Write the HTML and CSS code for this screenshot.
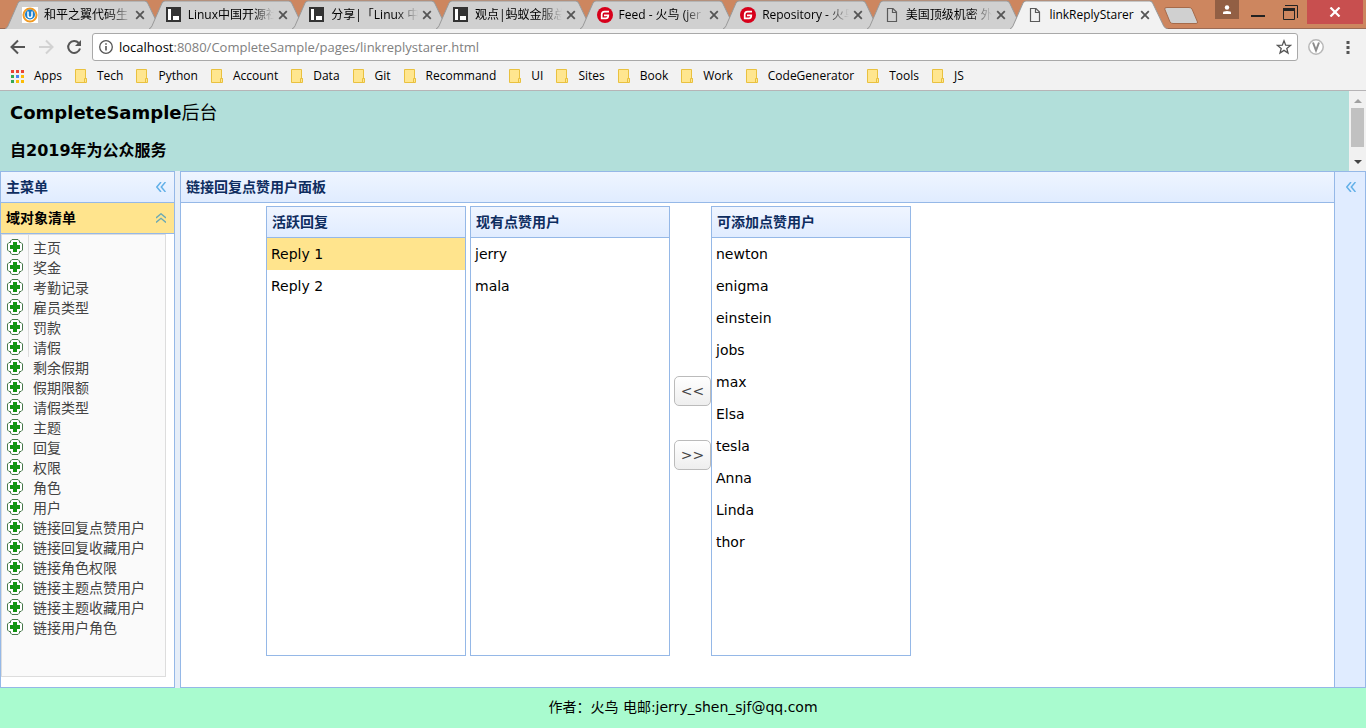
FILE: index.html
```html
<!DOCTYPE html>
<html lang="zh-CN">
<head>
<meta charset="utf-8">
<title>linkReplyStarer</title>
<link rel="stylesheet" href="styles.css">
</head>
<body>
<svg class="defs" aria-hidden="true">
  <symbol id="x" viewBox="0 0 10 10"><path d="M1.2 1.2 8.8 8.8M8.8 1.2 1.2 8.8" stroke="#555" stroke-width="1.8" fill="none"/></symbol>
  <symbol id="page" viewBox="0 0 16 16"><path d="M3.5 1.5H9L12.500 5V14.500H3.500ZM8.500 1.500V5.500H12.500" stroke="#5a5a5a" stroke-width="1.200" fill="none"/></symbol>
  <symbol id="lc" viewBox="0 0 16 16"><path fill="#333" d="M0 0H15V15H0Z"/><path fill="#fff" d="M2 2H5V13H2ZM7 9H13V13H7Z"/></symbol>
  <symbol id="gitee" viewBox="0 0 16 16"><circle cx="8" cy="8" r="8" fill="#d7001b"/><path d="M12 4.600H7.500Q4.700 4.600 4.700 7.400V11.400H9Q11.300 11.400 11.300 8.300H7" stroke="#fff" stroke-width="1.700" fill="none"/></symbol>
  <symbol id="wing" viewBox="0 0 16 16"><path fill="#fff" d="M0 0H16V16H0Z"/><circle cx="8" cy="8" r="6.500" fill="#fff" stroke="#f19a22" stroke-width="2"/><circle cx="8" cy="7.500" r="5" fill="#1b7fca"/><path d="M6 4.500V8.500Q6 10.500 8 10.500T10 8.500V4.500" stroke="#fff" stroke-width="1.500" fill="none"/></symbol>
  <symbol id="folder" viewBox="0 0 12 14"><path d="M.5.5H10.500V9.500H11.500V13.500H.5Z" fill="#ffe68f" stroke="#e9c13f"/><path d="M9.500 13V9.500H11.500" fill="none" stroke="#e9c13f"/></symbol>
  <symbol id="plus" viewBox="0 0 16 16"><path d="M5 .5H11L12.500 2V3.500H14L15.500 5V11L14 12.500H12.500V14L11 15.500H5L3.500 14V12.500H2L.5 11V5L2 3.500H3.500V2Z" fill="#fff" stroke="#47794b"/><path d="M6 3H10V6H13V10H10V13H6V10H3V6H6Z" fill="#119411"/></symbol>
  <symbol id="left" viewBox="0 0 10 10"><path d="M5 0 .8 5 5 10M9.500 0 5.300 5 9.500 10" stroke="#62b0e8" stroke-width="1.500" fill="none"/></symbol>
  <symbol id="up" viewBox="0 0 10 10"><path d="M0 5 5 .8 10 5M0 9.500 5 5.300 10 9.500" stroke="#6aa9b4" stroke-width="1.400" fill="none"/></symbol>
</svg>

<header class="browser">
  <div class="strip">
    <div class="tabs" id="tabs"></div>
    <svg class="newtab" viewBox="0 0 34 17"><path d="M3 .5H25Q27 .5 28 2L33.500 15Q34 16.500 32 16.500H9Q7 16.500 6 15L.7 2Q.3 .5 3 .5Z" fill="#d0d0d0" stroke="#a56a4a"/></svg>
    <div class="window">
      <button class="profile" aria-label="Profile"><svg width="10" height="10" viewBox="0 0 10 10"><circle cx="5" cy="2.500" r="2.200" fill="#fff"/><path d="M1 9V7.500Q1 6 5 6T9 7.500V9Z" fill="#fff"/></svg></button>
      <button class="minimize" aria-label="Minimize"><svg width="14" height="2"><path d="M0 0H14V2H0Z" fill="#222"/></svg></button>
      <button class="restore" aria-label="Restore"><svg width="15" height="15" viewBox="0 0 15 15"><path d="M.5 3.500H11.500V14.500H.5ZM2 .5H14.500V13" stroke="#222" fill="none"/><path d="M0 3H12V6H0Z" fill="#222"/></svg></button>
      <button class="close" aria-label="Close"><svg width="12" height="10" viewBox="0 0 12 10"><path d="M1.500.5 10.500 9.500M10.500.5 1.500 9.500" stroke="#fff" stroke-width="2.200"/></svg></button>
    </div>
  </div>
  <nav class="toolbar">
    <button aria-label="Back"><svg width="16" height="16" viewBox="0 0 16 16"><path d="M15 8H2M8 1.500 1.500 8 8 14.500" stroke="#555" stroke-width="2" fill="none"/></svg></button>
    <button aria-label="Forward"><svg width="16" height="16" viewBox="0 0 16 16"><path d="M1 8H14M8 1.500 14.500 8 8 14.500" stroke="#d2d2d2" stroke-width="2" fill="none"/></svg></button>
    <button aria-label="Reload"><svg width="16" height="16" viewBox="0 0 16 16"><path d="M12.700 4A6 6 0 1 0 14 9.500" stroke="#555" stroke-width="2" fill="none"/><path d="M15 1V7H9Z" fill="#555"/></svg></button>
    <div class="address">
      <svg width="16" height="16" viewBox="0 0 16 16"><circle cx="8" cy="8" r="6.300" stroke="#555" stroke-width="1.300" fill="none"/><path d="M7.200 7H8.800V11.500H7.200ZM7.200 4.300H8.800V5.800H7.200Z" fill="#555"/></svg>
      <a class="url" href="#"><b>localhost</b>:8080/CompleteSample/pages/linkreplystarer.html</a>
      <svg width="16" height="16" viewBox="0 0 16 16"><path d="M8 1.800 9.700 6.200 14.500 6.400 10.800 9.400 12 14 8 11.400 4 14 5.200 9.400 1.500 6.400 6.300 6.200Z" stroke="#555" stroke-width="1.300" fill="none"/></svg>
    </div>
    <svg class="ext" width="16" height="16" viewBox="0 0 16 16"><circle cx="8" cy="8" r="7.200" fill="#fff" stroke="#b8b8b8" stroke-width="1.500"/><path d="M5 3.500 8 11.500 11 3.500" stroke="#8d8d8d" stroke-width="2" fill="none"/></svg>
    <button aria-label="Menu"><svg width="4" height="14" viewBox="0 0 4 14"><path d="M.5 1H3.500V4H.5ZM.5 6H3.500V9H.5ZM.5 11H3.500V14H.5Z" fill="#555"/></svg></button>
  </nav>
  <nav class="bookmarks" id="bookmarks">
    <a href="#"><svg width="13" height="13" viewBox="0 0 13 13"><path fill="#ea4335" d="M0 0h3v3H0zM5 0h3v3H5zM10 0h3v3h-3z"/><path fill="#34a853" d="M0 5h3v3H0zM0 10h3v3H0z"/><path fill="#4285f4" d="M5 5h3v3H5z"/><path fill="#fbbc05" d="M10 5h3v3h-3zM5 10h3v3H5zM10 10h3v3h-3z"/></svg>Apps</a>
  </nav>
</header>

<div class="banner">
  <div class="titles">
    <h1>CompleteSample<span>后台</span></h1>
    <h2>自2019年为公众服务</h2>
  </div>
  <div class="scroll" aria-hidden="true">
    <svg width="8" height="4" viewBox="0 0 8 4"><path d="M0 4 4 0 8 4Z" fill="#a0a0a0"/></svg>
    <i></i>
    <svg width="8" height="4" viewBox="0 0 8 4"><path d="M0 0 4 4 8 0Z" fill="#444"/></svg>
  </div>
</div>

<div class="layout">
  <aside class="panel west">
    <h3 class="bar">主菜单<button aria-label="Collapse"><svg width="10" height="10"><use href="#left"/></svg></button></h3>
    <h3 class="bar selected">域对象清单<button aria-label="Fold"><svg width="10" height="10"><use href="#up"/></svg></button></h3>
    <ul class="menu" id="menu"></ul>
  </aside>
  <main class="panel center">
    <h3 class="bar">链接回复点赞用户面板</h3>
    <div class="work">
      <section class="panel list"><h3 class="bar">活跃回复</h3><ul><li class="on">Reply 1</li><li>Reply 2</li></ul></section>
      <section class="panel list"><h3 class="bar">现有点赞用户</h3><ul><li>jerry</li><li>mala</li></ul></section>
      <div class="pair">
        <div class="moves"><button>&lt;&lt;</button><button>&gt;&gt;</button></div>
        <section class="panel list"><h3 class="bar">可添加点赞用户</h3><ul><li>newton</li><li>enigma</li><li>einstein</li><li>jobs</li><li>max</li><li>Elsa</li><li>tesla</li><li>Anna</li><li>Linda</li><li>thor</li></ul></section>
      </div>
    </div>
  </main>
  <aside class="east"><button aria-label="Expand"><svg width="10" height="10"><use href="#left"/></svg></button></aside>
</div>

<footer class="foot">作者：火鸟 电邮:jerry_shen_sjf@qq.com</footer>
<script src="app.js"></script>
</body>
</html>
```
FILE: app.js
```js
const tabs = [
  ["wing", "和平之翼代码生"], ["lc", "Linux中国开源社"], ["lc", "分享|「Linux 中国"],
  ["lc", "观点|蚂蚁金服总"], ["gitee", "Feed - 火鸟 (jer"], ["gitee", "Repository - 火鸟"],
  ["page", "美国顶级机密 外"], ["page", "linkReplyStarer"]
];
document.getElementById("tabs").innerHTML = tabs.map(([icon, text], i) =>
  `<div class="tab${i === 7 ? " active" : ""}">
    <svg class="shape" viewBox="0 0 158 28" preserveAspectRatio="none"><path d="M0 28Q2 27 3 25L13 3Q14 1 16 1H140Q142 1 143 3L154 25Q155 27 158 28"/></svg>
    <svg class="fav" width="16" height="16"><use href="#${icon}"/></svg>
    <span>${text}</span>
    <button aria-label="Close tab"><svg width="10" height="10"><use href="#x"/></svg></button>
  </div>`).join("");

document.getElementById("bookmarks").insertAdjacentHTML("beforeend",
  ["Tech", "Python", "Account", "Data", "Git", "Recommand", "UI", "Sites", "Book", "Work", "CodeGenerator", "Tools", "JS"]
    .map(t => `<a href="#"><svg width="12" height="14"><use href="#folder"/></svg>${t}</a>`).join(""));

document.getElementById("menu").innerHTML =
  ["主页", "奖金", "考勤记录", "雇员类型", "罚款", "请假", "剩余假期", "假期限额", "请假类型", "主题", "回复", "权限", "角色", "用户",
    "链接回复点赞用户", "链接回复收藏用户", "链接角色权限", "链接主题点赞用户", "链接主题收藏用户", "链接用户角色"]
    .map(t => `<li><a href="#"><svg width="16" height="16"><use href="#plus"/></svg>${t}</a></li>`).join("");
```
FILE: styles.css
```css
* { box-sizing: border-box; }
body {
  margin: 0;
  min-height: 100vh;
  display: flex;
  flex-direction: column;
  background: #fff;
  color: #000;
  font: 14px/20px "DejaVu Sans", "Noto Sans CJK SC", sans-serif;
}
h1, h2, h3, ul { margin: 0; padding: 0; }
ul { list-style: none; }
a { color: inherit; text-decoration: none; }
button { border: 0; padding: 0; background: none; font: inherit; display: flex; align-items: center; justify-content: center; }
svg { display: block; flex: none; }
.defs { position: absolute; width: 0; height: 0; }

.browser { background: #f2f2f2; border-bottom: 1px solid #b6b4b6; font: 12px/16px "Open Sans", "Noto Sans CJK SC", sans-serif; }
.strip { display: flex; height: 29px; background: #cd865f; border-bottom: 1px solid #9a6a54; padding-left: 5px; }
.tabs { flex: 0 1 1149px; display: grid; grid-template-columns: repeat(8, minmax(0, 1fr)); height: 29px; }
.tab { position: relative; display: flex; align-items: center; padding: 1px 4px 0 17px; min-width: 0; }
.shape { position: absolute; left: 0; top: 0; width: calc(100% + 14px); height: 29px; fill: #d0d0d0; stroke: #999; }
.active { z-index: 1; }
.active .shape { fill: #f2f2f2; }
.tab .fav, .tab span, .tab button { position: relative; }
.tab span { flex: 1; margin: 0 4px 0 6px; white-space: nowrap; overflow: hidden; mask-image: linear-gradient(90deg, #000 75%, transparent); }
.tab.active span { mask-image: none; }
.newtab { width: 34px; height: 17px; margin: 7px 0 0 10px; }
.window { display: flex; margin-left: auto; height: 24px; align-items: stretch; }
.profile { width: 24px; height: 19px; background: #925f44; }
.minimize { width: 38px; padding-top: 8px; }
.restore { width: 26px; }
.close { width: 56px; background: #c84f4f; margin: 0 3px 0 4px; }
.toolbar { display: flex; align-items: center; height: 36px; padding: 0 16px 0 10px; gap: 12px; }
.address { flex: 1; display: flex; align-items: center; height: 28px; border: 1px solid #a9a9a9; border-radius: 3px; background: #fff; padding: 0 5px; gap: 5px; margin-left: -2px; }
.url { flex: 1; font-size: 13px; line-height: 20px; color: #808080; }
.url b { font-weight: 400; color: #000; }
.ext { margin: 0 8px 0 -2px; }
.toolbar > :last-child { padding-left: 2px; }
.bookmarks { display: flex; height: 25px; padding: 0 11px 3px; gap: 13px; align-items: center; }
.bookmarks a { display: flex; align-items: center; gap: 10px; }

.banner { display: flex; height: 80px; background: #b2dfda; }
.titles { flex: 1; padding: 8px 10px; }
.titles h1 { font-size: 18px; line-height: 28px; }
.titles h1 span { font-weight: 400; }
.titles h2 { font-size: 16px; line-height: 24px; margin-top: 12px; }
.scroll { width: 17px; background: #f1f1f1; display: flex; flex-direction: column; align-items: center; padding: 8px 0 7px; }
.scroll i { width: 13px; height: 39px; background: #c1c1c1; margin: 5px 0 auto; }

.layout { flex: 1; display: flex; background: #e6eef8; }
.panel { border: 1px solid #95b8e7; background: #fff; }
.bar { display: flex; align-items: center; justify-content: space-between; height: 31px; padding: 0 8px 0 5px; border-bottom: 1px solid #95b8e7; background: linear-gradient(#eff5ff, #e0ecff); color: #0e2d5f; font-size: 14px; line-height: 20px; }
.selected { background: #ffe48d; color: #000; }
.west { width: 175px; margin-right: 5px; }
.menu { width: 165px; height: 443px; padding: 3px 0 0 5px; background: linear-gradient(#ddd, #ddd) 26px 0 / 1px 122px no-repeat #fafafa; border: 1px solid #ddd; }
.menu a { display: flex; align-items: center; gap: 10px; height: 20px; line-height: 20px; color: #444; }
.menu svg { margin-bottom: 2px; }
.center { flex: 1; }
.work { display: flex; gap: 4px; padding: 3px 0 0 85px; }
.list { width: 200px; height: 450px; }
.list li { height: 32px; line-height: 32px; padding-left: 4px; }
.list .on { background: #ffe48d; }
.pair { display: flex; }
.moves { display: flex; flex-direction: column; gap: 34px; padding-top: 170px; }
.moves button { width: 37px; height: 30px; border: 1px solid #bbb; border-radius: 5px; background: linear-gradient(#fff, #eee); color: #444; }
.east { width: 32px; margin-left: -1px; border: 1px solid #95b8e7; background: #e0ecff; padding: 10px 0 0 11px; }
.foot { height: 40px; background: #a9fbcf; text-align: center; line-height: 38px; }
```
